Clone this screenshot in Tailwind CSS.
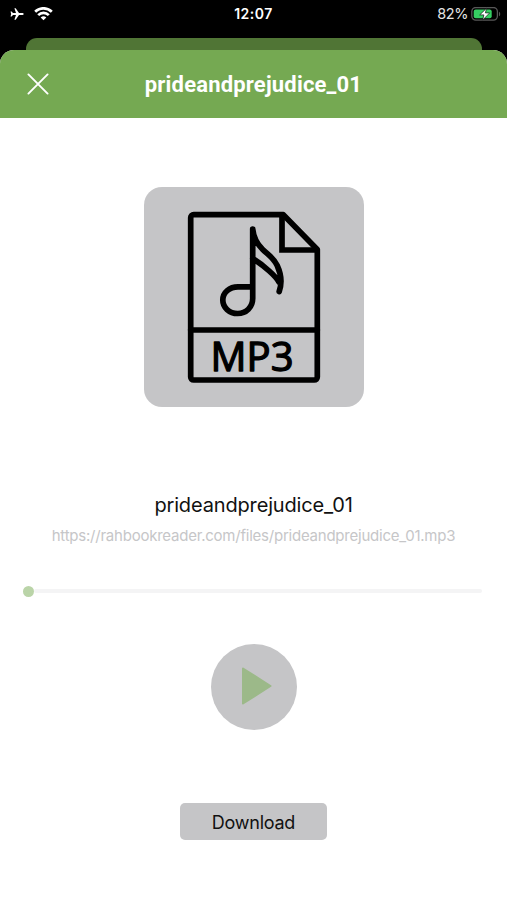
<!DOCTYPE html>
<html lang="en">
<head>
<meta charset="utf-8">
<meta name="viewport" content="width=device-width, initial-scale=1">
<title>prideandprejudice_01</title>
<script src="https://cdn.jsdelivr.net/npm/@tailwindcss/browser@4"></script>
</head>
<body class="bg-black font-['Inter',sans-serif]">
<div class="flex h-[900px] w-[507px] flex-col overflow-hidden bg-black">
  <div class="grid h-[38px] shrink-0 grid-cols-3 items-start text-[14px] leading-[28px] text-white">
    <div class="flex h-[28px] items-center gap-[10px] pl-[10px]">
      <svg class="h-[14px] w-[14px]" viewBox="0 0 14 14" fill="#fff"><path d="M13.7 7c0-.6-.8-1-1.8-1H9L5.700 1.200H4.400L6 6H3L1.600 4.400H.5L1.200 7 .5 9.600H1.600L3 8h3L4.400 12.800h1.300L9 8h2.900c1 0 1.800-.4 1.800-1z"/></svg>
      <svg class="h-[14px] w-[19px]" viewBox="0 0 19 14" fill="none" stroke="#fff" stroke-width="2.700"><path d="M1.200 4.800a11.600 11.600 0 0 1 16.600 0M4.200 8.100a7.500 7.500 0 0 1 10.600 0"/><path d="M9.500 13.200 6.700 10.500a4 4 0 0 1 5.600 0z" fill="#fff" stroke="none"/></svg>
    </div>
    <div class="text-center font-semibold tracking-[0.5px]">12:07</div>
    <div class="flex h-[28px] items-center justify-end gap-[3px] pr-[6px]">
      <span class="text-[14.500px] tracking-[-0.4px] text-[#e4e4e4]">82%</span>
      <svg class="h-[15px] w-[30px]" viewBox="0 0 30 15"><rect x=".8" y=".5" width="25.600" height="12.600" rx="4" fill="none" stroke="#585858" stroke-width="1.300"/><rect x="2.700" y="2.400" width="18" height="8.800" rx="2" fill="#35cf62"/><path d="M28 4.700c1.600.6 1.600 4 0 4.600z" fill="#585858"/><path d="M15.600 1.200 8.700 7.900h4.200l-1.300 5.200 7.100-7.200h-4.300z" fill="#fff" stroke="#111" stroke-width=".7"/></svg>
    </div>
  </div>
  <div class="mx-[26px] -mb-[14px] h-[26px] w-[456px] shrink-0 rounded-t-[11px] bg-[#507535]"></div>
  <main class="z-10 flex flex-1 flex-col items-center overflow-hidden rounded-t-[14px] bg-white">
    <header class="grid h-[68px] w-full shrink-0 grid-cols-[76px_1fr_76px] items-center bg-[#75a952]">
      <button class="flex justify-center" aria-label="Close"><svg class="h-[22px] w-[22px]" viewBox="0 0 22 22" fill="none" stroke="#fff" stroke-width="1.900" stroke-linecap="round"><path d="m1.400 1.400 19.200 19.200M20.600 1.400 1.400 20.600"/></svg></button>
      <h1 class="pt-[2px] text-center font-['Roboto',sans-serif] text-[22px] font-bold leading-[26px] tracking-[0.18px] text-white">prideandprejudice_01</h1>
    </header>
    <div class="mt-[69px] h-[220px] w-[220px] shrink-0 rounded-[18px] bg-[#c5c5c7]">
      <svg class="h-full w-full" viewBox="0 0 220 220" fill="none" stroke="#000" stroke-width="5.700" stroke-linejoin="round" stroke-linecap="round">
        <path d="M139.300 27.700H49.700a3 3 0 0 0-3 3V190a3 3 0 0 0 3 3h120.600a3 3 0 0 0 3-3V62.500z"/>
        <path d="M138 28.500V63h34" stroke-linejoin="miter"/>
        <path d="M46.700 143h126.600"/>
        <path d="M108.700 42v69.500c0 8.500-6.500 15-15 15s-14.900-6-14.900-13.500S85.500 99.800 94 99.800h14.700M108.700 42c1 10 4.800 15.500 10 20.500 7 6.500 11 8.500 14.500 16 3.700 8 4.800 18 2 26M108.700 71.500c4 2.500 11.500 8 16.500 12.500 4.500 4 7.500 7 9.800 11" stroke-width="5.700"/>
        <text x="66.500" y="183.700" font-family="Open Sans, sans-serif" font-size="40" font-weight="400" fill="#000" stroke="#000" stroke-width="1.300" textLength="83">MP3</text>
      </svg>
    </div>
    <h2 class="mt-[84px] text-[20px] leading-[28px] tracking-[-0.15px] text-[#111]">prideandprejudice_01</h2>
    <p class="mt-[5px] text-[15px] leading-[24px] tracking-[-0.23px] text-[#c6c6c8]">https://rahbookreader.com/files/prideandprejudice_01.mp3</p>
    <div class="mt-[37px] mr-[2px] flex h-[12px] w-[459px] items-center">
      <span class="h-[11px] w-[11px] rounded-full bg-[#bad4a8]"></span>
      <span class="h-[4px] flex-1 rounded-full bg-[#f4f4f5]"></span>
    </div>
    <button class="mt-[47px] flex h-[86px] w-[86px] shrink-0 items-center justify-center rounded-full bg-[#c5c5c7]" aria-label="Play">
      <svg class="h-[86px] w-[86px]" viewBox="0 0 86 86"><path d="M32 24.500 59.500 42 32 59.500z" fill="#9cb989" stroke="#9cb989" stroke-width="2" stroke-linejoin="round"/></svg>
    </button>
    <button class="mt-[73px] h-[37px] w-[147px] shrink-0 rounded-[5px] bg-[#c5c5c7] pt-px text-[18px] leading-[37px] tracking-[-0.25px] text-[#111]">Download</button>
  </main>
</div>
</body>
</html>
